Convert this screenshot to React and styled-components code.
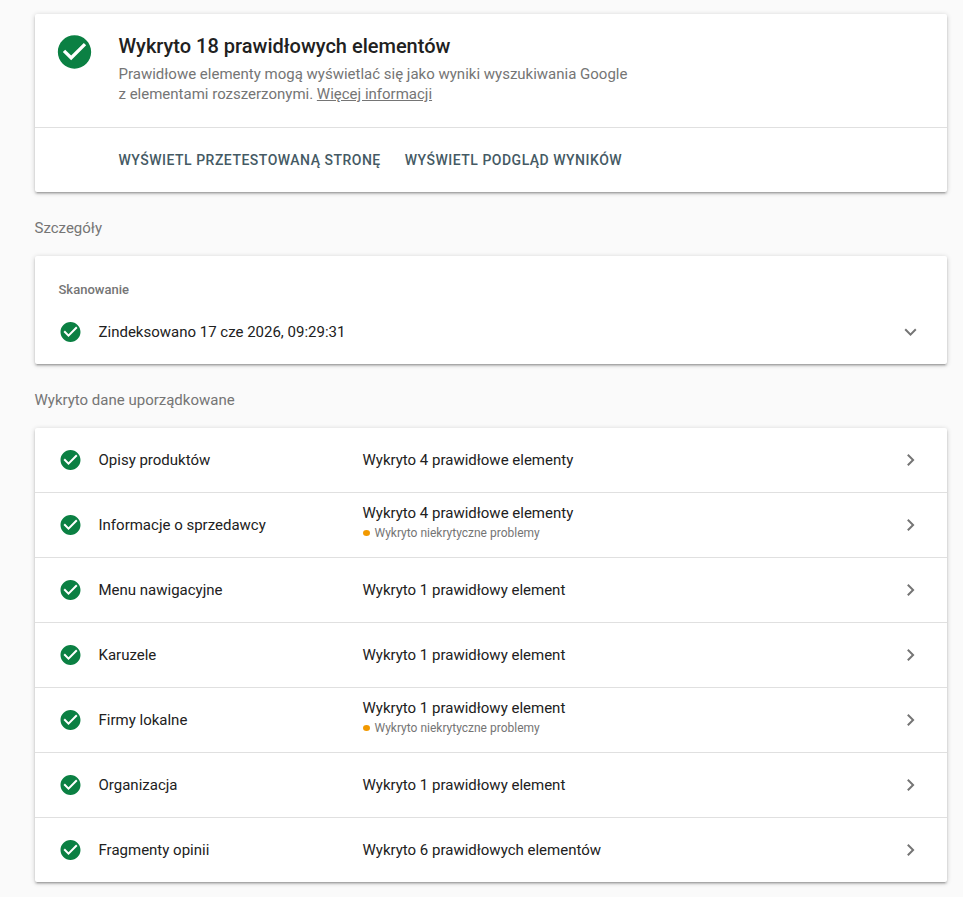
import React from 'react';
import styled, { createGlobalStyle } from 'styled-components';

const GlobalStyle = createGlobalStyle`
  body {
    margin: 0;
    background: #fafafa;
    font-family: Roboto, 'Liberation Sans', sans-serif;
    color: #212121;
  }
`;

const Page = styled.main`
  box-sizing: border-box;
  width: 963px;
  height: 897px;
  padding: 14px 16px 0 34.5px;
  overflow: hidden;
`;

const Card = styled.section`
  background: #fff;
  border-radius: 2px;
  box-shadow: 0 2px 2px 0 rgba(0, 0, 0, 0.14), 0 3px 1px -2px rgba(0, 0, 0, 0.12),
    0 1px 5px 0 rgba(0, 0, 0, 0.2);
`;

const Summary = styled.div`
  display: flex;
  box-sizing: border-box;
  height: 114px;
  padding: 18px 20px 0;
  border-bottom: 1px solid #e0e0e0;
`;

const SummaryText = styled.div`
  margin-left: 24px;
`;

const Title = styled.h1`
  margin: 0;
  font-size: 20px;
  font-weight: 500;
  line-height: 28px;
`;

const Description = styled.p`
  margin: 4px 0 0;
  font-size: 15px;
  line-height: 20px;
  color: #757575;
`;

const MoreLink = styled.a`
  color: inherit;
  text-decoration: underline;
`;

const Actions = styled.div`
  display: flex;
  align-items: center;
  gap: 24px;
  height: 64px;
  padding-left: 84px;
`;

const ActionButton = styled.button`
  padding: 0;
  border: 0;
  background: none;
  font: 500 14px/20px Roboto, 'Liberation Sans', sans-serif;
  letter-spacing: 0.5px;
  text-transform: uppercase;
  color: #455a64;
`;

const SectionTitle = styled.h2`
  margin: 0;
  padding: 26px 0 18px;
  font-size: 15px;
  font-weight: 400;
  line-height: 20px;
  color: #757575;
`;

const CardLabel = styled.div`
  padding: 24px 24px 0;
  font-size: 13px;
  font-weight: 500;
  line-height: 20px;
  color: #757575;
`;

const Row = styled.div`
  display: flex;
  align-items: center;
  height: 64px;
  padding: 0 24px;
  font-size: 15px;
  line-height: 20px;

  & + & {
    border-top: 1px solid #e0e0e0;
  }
`;

const RowName = styled.div`
  width: ${(props) => (props.$wide ? 'auto' : '264px')};
  margin-left: 16px;
`;

const RowStatus = styled.div`
  flex: 1;
`;

const Warning = styled.div`
  display: flex;
  align-items: center;
  margin-bottom: 4px;
  font-size: 12px;
  line-height: 20px;
  color: #757575;

  &::before {
    content: '';
    width: 7px;
    height: 6px;
    margin-right: 5px;
    border-radius: 50%;
    background: #f29900;
  }
`;

const Icon = styled.svg`
  flex: none;
  width: ${(props) => props.$size}px;
  height: ${(props) => props.$size}px;
  fill: ${(props) => props.$color};
  transform: translateX(-0.5px);
`;

const Chevron = styled(Icon)`
  margin-left: auto;
`;

const CheckIcon = ({ size = 24 }) => (
  <Icon viewBox="0 0 24 24" $size={size} $color="#0b8043">
    <path d="M12 2C6.48 2 2 6.48 2 12s4.48 10 10 10 10-4.48 10-10S17.52 2 12 2zm-2 15l-5-5 1.41-1.41L10 14.17l7.59-7.59L19 8l-9 9z" />
  </Icon>
);

const ChevronIcon = ({ down }) => (
  <Chevron viewBox="0 0 24 24" $size={24} $color="#757575">
    <path
      d={
        down
          ? 'M7.41 8.59L12 13.17l4.59-4.58L18 10l-6 6-6-6z'
          : 'M8.59 16.59L13.17 12 8.59 7.41 10 6l6 6-6 6z'
      }
    />
  </Chevron>
);

const items = [
  { name: 'Opisy produktów', status: 'Wykryto 4 prawidłowe elementy' },
  { name: 'Informacje o sprzedawcy', status: 'Wykryto 4 prawidłowe elementy', warning: true },
  { name: 'Menu nawigacyjne', status: 'Wykryto 1 prawidłowy element' },
  { name: 'Karuzele', status: 'Wykryto 1 prawidłowy element' },
  { name: 'Firmy lokalne', status: 'Wykryto 1 prawidłowy element', warning: true },
  { name: 'Organizacja', status: 'Wykryto 1 prawidłowy element' },
  { name: 'Fragmenty opinii', status: 'Wykryto 6 prawidłowych elementów' },
];

const App = () => {
  return (
    <Page>
      <GlobalStyle />
      <Card>
        <Summary>
          <CheckIcon size={40} />
          <SummaryText>
            <Title>Wykryto 18 prawidłowych elementów</Title>
            <Description>
              Prawidłowe elementy mogą wyświetlać się jako wyniki wyszukiwania Google
              <br />z elementami rozszerzonymi. <MoreLink>Więcej informacji</MoreLink>
            </Description>
          </SummaryText>
        </Summary>
        <Actions>
          <ActionButton>Wyświetl przetestowaną stronę</ActionButton>
          <ActionButton>Wyświetl podgląd wyników</ActionButton>
        </Actions>
      </Card>

      <SectionTitle>Szczegóły</SectionTitle>
      <Card>
        <CardLabel>Skanowanie</CardLabel>
        <Row>
          <CheckIcon />
          <RowName $wide>Zindeksowano 17 cze 2026, 09:29:31</RowName>
          <ChevronIcon down />
        </Row>
      </Card>

      <SectionTitle>Wykryto dane uporządkowane</SectionTitle>
      <Card>
        {items.map((item) => (
          <Row key={item.name}>
            <CheckIcon />
            <RowName>{item.name}</RowName>
            <RowStatus>
              {item.status}
              {item.warning && <Warning>Wykryto niekrytyczne problemy</Warning>}
            </RowStatus>
            <ChevronIcon />
          </Row>
        ))}
      </Card>
    </Page>
  );
};

export default App;
